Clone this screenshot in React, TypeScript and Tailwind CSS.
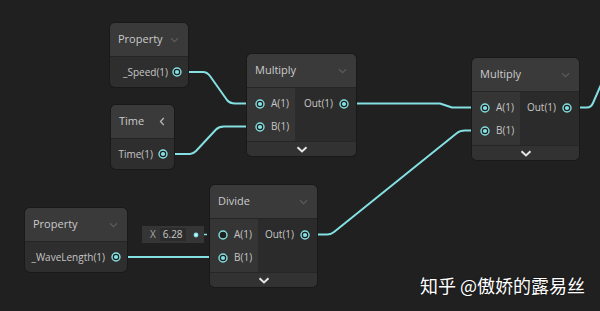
import React from "react";

const CYAN = "#84e0e2";

function Port({ connected = true }: { connected?: boolean }) {
  return (
    <svg width="10" height="10" viewBox="0 0 10 10" className="shrink-0">
      <circle cx="5" cy="5" r="4" fill="#1f1f1f" stroke={CYAN} strokeWidth="1.4" />
      {connected && <circle cx="5" cy="5" r="2.1" fill={CYAN} />}
    </svg>
  );
}

function DimChevron() {
  return (
    <svg width="9" height="6" viewBox="0 0 9 6" className="shrink-0">
      <path d="M1 1.2 L4.5 4.6 L8 1.2" fill="none" stroke="#5c5c5c" strokeWidth="1.2" />
    </svg>
  );
}

function LeftChevron() {
  return (
    <svg width="6" height="9" viewBox="0 0 6 9" className="shrink-0">
      <path d="M4.8 1 L1.5 4.5 L4.8 8" fill="none" stroke="#b8b8b8" strokeWidth="1.3" />
    </svg>
  );
}

function BottomChevron() {
  return (
    <svg width="12" height="7" viewBox="0 0 12 7">
      <path d="M1.5 1.3 L6 5.5 L10.5 1.3" fill="none" stroke="#e6e6e6" strokeWidth="2" />
    </svg>
  );
}

function Header({ title, icon }: { title: string; icon: React.ReactNode }) {
  return (
    <div className="h-[34px] flex items-center justify-between pl-[8px] pr-[9px] bg-[#3a3a3a] border-b border-[#252525] rounded-t-[5px] text-[11px] text-[#cacaca]">
      <span>{title}</span>
      {icon}
    </div>
  );
}

function MathBody({ inputs, connectedA = true }: { inputs: string[]; connectedA?: boolean }) {
  return (
    <>
      <div className="flex text-[10px] text-[#c6c6c6]">
        <div className="w-[48px] bg-[#353535] pt-[4px] pb-[3px]">
          {inputs.map((name, i) => (
            <div key={name} className="h-[23px] flex items-center pl-[8px] gap-[6px]">
              <Port connected={i === 0 ? connectedA : true} />
              <span>{name}</span>
            </div>
          ))}
        </div>
        <div className="flex-1 bg-[#2b2b2b] pt-[4px]">
          <div className="h-[23px] flex items-center justify-end pr-[7px] gap-[6px]">
            <span>Out(1)</span>
            <Port />
          </div>
        </div>
      </div>
      <div className="h-[15px] flex items-center justify-center bg-[#323232] border-t border-[#262626] rounded-b-[5px]">
        <BottomChevron />
      </div>
    </>
  );
}

export default function App() {
  return (
    <div
      className="relative w-[600px] h-[311px] overflow-hidden bg-[#202020]"
      style={{ fontFamily: '"Open Sans", "Noto Sans", sans-serif' }}
    >
      {/* wires */}
      <svg className="absolute inset-0" width="600" height="311" viewBox="0 0 600 311">
        <g fill="none" stroke={CYAN} strokeWidth="2" strokeLinejoin="round">
          <path d="M182 72 H203 Q207 72 210 76 L227 100 Q230 103.5 235 103.5 H256" />
          <path d="M168 154 H190 Q193 154 196 151 L216 129.5 Q219 126.5 224 126.5 H256" />
          <path d="M349 103.5 H440 L452 107.5 H478" />
          <path d="M310 234.5 H327 Q331 234.5 334 232 L457 133 Q460 130.5 465 130.5 H478" />
          <path d="M121 257 H216" />
          <path d="M572 107.5 H587 Q591 107.5 593 103 L603 80" />
        </g>
        <path d="M199 234.5 H216" stroke={CYAN} strokeWidth="1.6" strokeDasharray="3 2" />
      </svg>

      {/* Property _Speed */}
      <div className="absolute left-[110px] top-[23px] w-[78px] rounded-[5px] bg-[#2e2e2e] shadow-[0_0_0_1px_#191919]">
        <Header title="Property" icon={<DimChevron />} />
        <div className="h-[30px] flex items-center justify-end pr-[6px] gap-[4px] text-[10px] text-[#c6c6c6]">
          <span>_Speed(1)</span>
          <Port />
        </div>
      </div>

      {/* Time */}
      <div className="absolute left-[111px] top-[105px] w-[63px] rounded-[5px] bg-[#2e2e2e] shadow-[0_0_0_1px_#191919]">
        <Header title="Time" icon={<LeftChevron />} />
        <div className="h-[30px] flex items-center justify-end pr-[6px] gap-[5px] text-[10px] text-[#c6c6c6]">
          <span>Time(1)</span>
          <Port />
        </div>
      </div>

      {/* Multiply 1 */}
      <div className="absolute left-[247px] top-[54px] w-[109px] rounded-[5px] bg-[#2e2e2e] shadow-[0_0_0_1px_#191919]">
        <Header title="Multiply" icon={<DimChevron />} />
        <MathBody inputs={["A(1)", "B(1)"]} />
      </div>

      {/* Multiply 2 */}
      <div className="absolute left-[472px] top-[58px] w-[107px] rounded-[5px] bg-[#2e2e2e] shadow-[0_0_0_1px_#191919]">
        <Header title="Multiply" icon={<DimChevron />} />
        <MathBody inputs={["A(1)", "B(1)"]} />
      </div>

      {/* Divide */}
      <div className="absolute left-[210px] top-[185px] w-[107px] rounded-[5px] bg-[#2e2e2e] shadow-[0_0_0_1px_#191919]">
        <Header title="Divide" icon={<DimChevron />} />
        <MathBody inputs={["A(1)", "B(1)"]} connectedA={false} />
      </div>

      {/* Inline value */}
      <div className="absolute left-[142px] top-[226px] w-[62px] h-[17px] flex items-center bg-[#353535] pl-[8px] text-[10px]">
        <span className="text-[#a8a8a8]">X</span>
        <span className="ml-[4px] h-[13px] px-[3px] flex items-center bg-[#2c2c2c] text-[#c8c8c8]">6.28</span>
        <svg width="6" height="6" viewBox="0 0 6 6" className="ml-auto mr-[5px]">
          <circle cx="3" cy="3" r="2.4" fill={CYAN} />
          <circle cx="3" cy="3" r="1" fill="#e8ffff" />
        </svg>
      </div>

      {/* Property _WaveLength */}
      <div className="absolute left-[25px] top-[208px] w-[102px] rounded-[5px] bg-[#2e2e2e] shadow-[0_0_0_1px_#191919]">
        <Header title="Property" icon={<DimChevron />} />
        <div className="h-[30px] flex items-center justify-end pr-[6px] gap-[6px] text-[10px] text-[#c6c6c6]">
          <span>_WaveLength(1)</span>
          <Port />
        </div>
      </div>

      {/* watermark */}
      <div
        className="absolute left-[420px] top-[274px] text-[18px] leading-[22px] text-white [text-shadow:0_0_2px_rgba(0,0,0,0.6)]"
        style={{ fontFamily: '"Noto Sans CJK SC", "Noto Sans", sans-serif' }}
      >
        知乎 @傲娇的露易丝
      </div>
    </div>
  );
}
